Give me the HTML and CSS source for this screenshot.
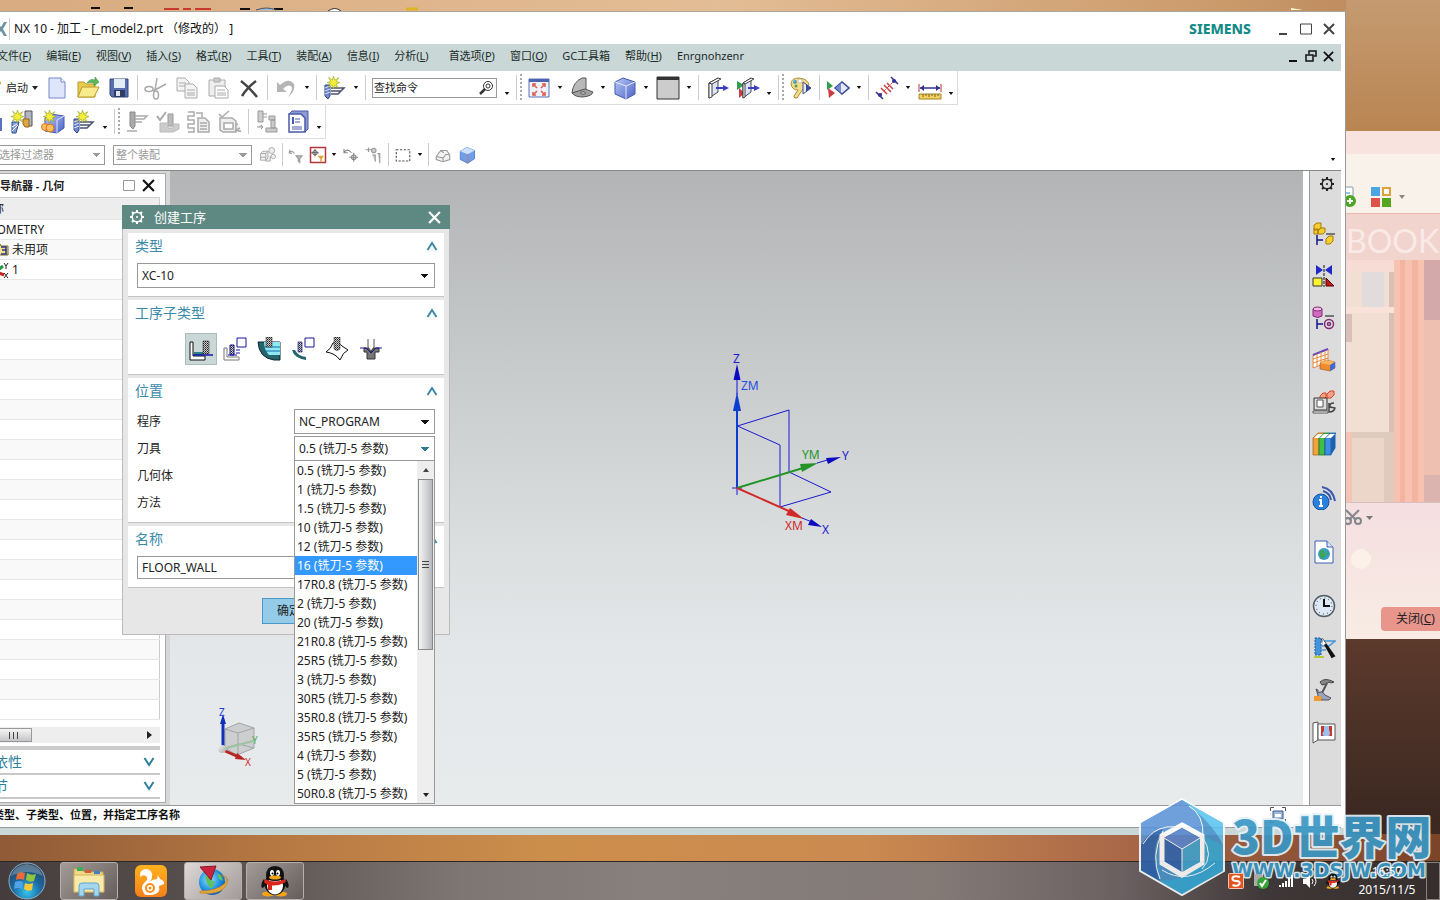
FILE: index.html
```html
<!DOCTYPE html>
<html lang="zh-CN">
<head>
  <meta charset="UTF-8">
  <meta name="viewport" content="width=device-width, initial-scale=1.0">
  <title>NX 10 - 加工</title>
  <link rel="stylesheet" href="styles.css">
</head>
<body>
<!-- shared shapes -->
<svg class="defs" aria-hidden="true">
  <defs>
    <linearGradient id="blueFace" x1="0" y1="0" x2="1" y2="1"><stop offset="0" stop-color="#b9c8f6"/><stop offset="1" stop-color="#4d63c6"/></linearGradient>
    <linearGradient id="grayFace" x1="0" y1="0" x2="1" y2="1"><stop offset="0" stop-color="#f2f2f2"/><stop offset="1" stop-color="#aaa"/></linearGradient>
    <linearGradient id="orange" x1="0" y1="0" x2="0" y2="1"><stop offset="0" stop-color="#ffb21c"/><stop offset="1" stop-color="#f5801a"/></linearGradient>
    <radialGradient id="orb" cx=".5" cy=".8" r=".8"><stop offset="0" stop-color="#35c4ee"/><stop offset=".5" stop-color="#1c669f"/><stop offset="1" stop-color="#28415c"/></radialGradient>
    <radialGradient id="globe" cx=".4" cy=".4" r=".7"><stop offset="0" stop-color="#8fe4ff"/><stop offset=".6" stop-color="#1f8fe0"/><stop offset="1" stop-color="#0b4fa0"/></radialGradient>
    <pattern id="knurl" width="2" height="2" patternUnits="userSpaceOnUse"><rect width="2" height="2" fill="#ccc"/><rect width="1" height="1" fill="#222"/><rect x="1" y="1" width="1" height="1" fill="#555"/></pattern>
    <symbol id="caret" viewBox="0 0 6 4"><path d="M0 0h6L3 4z" fill="currentColor"/></symbol>
    <symbol id="cross" viewBox="0 0 12 12"><path d="M1 1l10 10M11 1L1 11" stroke="currentColor" stroke-width="2" fill="none"/></symbol>
    <symbol id="up" viewBox="0 0 12 10"><path d="M1.500 9L6 2l4.500 7" stroke="currentColor" stroke-width="2" fill="none"/></symbol>
    <symbol id="down" viewBox="0 0 12 10"><path d="M1.500 1L6 8l4.500-7" stroke="currentColor" stroke-width="2" fill="none"/></symbol>
    <symbol id="gear" viewBox="0 0 16 16"><g stroke="currentColor" fill="none"><circle cx="8" cy="8" r="4.800" stroke-width="1.500"/><path d="M8 1v2M8 13v2M1 8h2M13 8h2M3 3l1.500 1.500M11.500 11.500L13 13M13 3l-1.500 1.500M4.500 11.500L3 13" stroke-width="2"/></g><circle cx="8" cy="8" r="1" fill="currentColor"/></symbol>
    <symbol id="spark" viewBox="0 0 12 12"><path d="M6 0l1.200 3.800L11 1.500 8.500 5 12 6 8.500 7.300 10.500 11 7 8.700 6 12 4.800 8.500 1 10.500 3.300 7 0 6l3.500-1L1.500 1.200 4.800 3.700z" fill="#f3ee3a" stroke="#8c9a20" stroke-width=".5"/></symbol>
    <symbol id="newop" viewBox="0 0 24 24"><path d="M2 9h5v11l-2 3-3-3z" fill="#6f86c9" stroke="#33458f"/><path d="M2 12l5-2M2 15l5-2M2 18l5-2" stroke="#dde5fa"/><path d="M8 12h13l-3 3H8M8 18h7l3-3" fill="none" stroke="#4a5370" stroke-width="1.500"/><use href="#spark" x="4" y="0" width="13" height="13"/></symbol>
    <symbol id="cubeblue" viewBox="0 0 24 24"><path d="M2 6l8-4 12 4v12l-9 5-11-5z" fill="url(#blueFace)" stroke="#4358b2"/><path d="M2 6l11 4 9-4M13 10v13" fill="none" stroke="#e1e8ff"/></symbol>
    <symbol id="penguin" viewBox="0 0 28 32"><ellipse cx="7" cy="29" rx="6" ry="2.500" fill="#f7a413"/><ellipse cx="20" cy="29" rx="6" ry="2.500" fill="#f7a413"/><path d="M3 14Q-1 19 1 23q2 0 4-4zM25 14q4 5 2 9-2 0-4-4z" fill="#111"/><ellipse cx="14" cy="19" rx="10.500" ry="11" fill="#111"/><ellipse cx="14" cy="21" rx="8" ry="8.500" fill="#fff"/><path d="M5 11Q5 1 14 1t9 10q0 5-9 5t-9-5z" fill="#111"/><ellipse cx="11" cy="8" rx="2" ry="3" fill="#fff"/><ellipse cx="17" cy="8" rx="2" ry="3" fill="#fff"/><circle cx="11.500" cy="8.500" r="1"/><circle cx="16.500" cy="8.500" r="1"/><ellipse cx="14" cy="12.500" rx="6" ry="2" fill="#f7a413"/><path d="M4 14q10 5 20 0l1 3q-7 4-14 3.500V25H7v-5l-4-2.500z" fill="#d8261c"/></symbol>
  </defs>
</svg>

<div class="desktop">
  <!-- bottoms of the desktop shortcuts behind the window -->
  <svg class="shortcuts" width="1440" height="11" aria-hidden="true">
    <path d="M91 8h9M124 8h9M240 9h10M274 9h9" stroke="#111" stroke-width="2"/>
    <path d="M164 9h15M183 9h8M195 9h16" stroke="#c93a2c" stroke-width="2"/>
    <path d="M256 10q11-4 20 0" fill="#9db8de" stroke="#456"/><path d="M328 11q7-5 13 0" fill="#fff" stroke="#333"/>
    <path d="M406 9h12" stroke="#e0b321" stroke-width="3"/><path d="M1291 8l12 2h-12z" fill="#fff3d8"/>
  </svg>

  <!-- chat window behind -->
  <section class="chat">
    <div class="chat-top"></div>
    <div class="chat-tools">
      <svg width="14" height="24" viewBox="0 0 14 24"><rect x="-8" y="2" width="15" height="14" rx="1" fill="#fff" stroke="#7c98b0"/><path d="M0 8h4" stroke="#1a8cb5"/><circle cx="4" cy="16" r="6" fill="#4ba626"/><path d="M1 16h6M4 13v6" stroke="#fff" stroke-width="2"/></svg>
      <svg width="20" height="20" viewBox="0 0 20 20"><rect width="9" height="9" fill="#4ba5e2"/><rect x="12" y="1" width="7" height="7" fill="#fff" stroke="#dfa23a" stroke-width="2"/><rect y="11" width="9" height="9" fill="#dd524a"/><rect x="11" y="11" width="9" height="9" fill="#57a61f"/></svg>
      <svg class="chat-caret" width="8" height="4"><use href="#caret"/></svg>
    </div>
    <div class="chat-book">BOOK</div>
    <div class="chat-shelf">
      <svg width="100%" height="100%" viewBox="0 0 94 242" preserveAspectRatio="none"><rect width="94" height="242" fill="#f4c4b6"/><path d="M0 0h48v12H0z" fill="#f7dcd5"/><path d="M0 12h43v160H0z" fill="#f2dfd3"/><path d="M16 12h22v35H16z" fill="#e2dbdc"/><path d="M43 12h5v160h-5zM0 54h6v28H0z" fill="#d9bfb6"/><path d="M0 47h48v6H0z" fill="#f9e2da"/><path d="M6 172h42v70H6z" fill="#dfcbbe"/><path d="M6 178h32v64H6z" fill="#ecd6ca"/><path d="M48 0h30v242H48z" fill="#f7c3b0"/><path d="M54 0h5v242h-5zM66 0h6v242h-6z" fill="#f3b59f"/><path d="M78 0h16v60H78z" fill="#d3aaa9"/><path d="M78 60h16v155H78z" fill="#edc0b2"/><path d="M78 215h16v27H78z" fill="#dcb4af"/></svg>
    </div>
    <div class="chat-input">
      <svg width="30" height="18" viewBox="0 0 30 18"><g fill="none" stroke="#85868c" stroke-width="2"><path d="M0 1l10 10M13 1L3 11"/><circle cx="2" cy="12" r="3"/><circle cx="12" cy="12" r="3"/></g><path d="M20 7h7l-3.500 4z" fill="#777"/></svg>
      <span class="bubble"></span>
      <button class="chat-close">关闭(<u>C</u>)</button>
    </div>
  </section>

  <main class="nx">
    <header class="titlebar">
      <svg class="nx-logo" width="24" height="20" viewBox="0 0 24 20"><path d="M8 3l5 7-5 7h5l4-5 3 5h3l-4-7 4-7h-3l-3 5-4-5z" fill="#6e93a3"/></svg>
      <h1>NX 10 - 加工 - [_model2.prt （修改的） ]</h1>
      <strong class="brand">SIEMENS</strong>
      <div class="winbtns">
        <button aria-label="最小化"><svg width="12" height="12"><path d="M2 11h8" stroke="#444" stroke-width="2"/></svg></button>
        <button aria-label="最大化"><svg width="12" height="12"><path d="M.5 1h11v10H.5z" fill="none" stroke="#444"/></svg></button>
        <button aria-label="关闭"><svg width="12" height="12" color="#444"><use href="#cross"/></svg></button>
      </div>
    </header>

    <nav class="menubar">
      <a href="#">文件(<u>F</u>)</a><a href="#">编辑(<u>E</u>)</a><a href="#">视图(<u>V</u>)</a><a href="#">插入(<u>S</u>)</a><a href="#">格式(<u>R</u>)</a><a href="#">工具(<u>T</u>)</a><a href="#">装配(<u>A</u>)</a><a href="#">信息(<u>I</u>)</a><a href="#">分析(<u>L</u>)</a><a class="pref" href="#">首选项(<u>P</u>)</a><a href="#">窗口(<u>O</u>)</a><a href="#">GC工具箱</a><a href="#">帮助(<u>H</u>)</a><a href="#">Enrgnohzenr</a>
      <div class="docbtns">
        <button aria-label="最小化文档"><svg width="12" height="12"><path d="M2 11h8" stroke="#111" stroke-width="2"/></svg></button>
        <button aria-label="还原文档"><svg width="12" height="12"><path d="M4 4V1h7v5H9" fill="none" stroke="#111" stroke-width="1.500"/><path d="M1 5h7v6H1z" fill="none" stroke="#111" stroke-width="1.500"/></svg></button>
        <button aria-label="关闭文档"><svg width="11" height="11" color="#111"><use href="#cross"/></svg></button>
      </div>
    </nav>

    <div class="toolbars">
      <div class="tools">
        <button class="start-btn"><svg width="14" height="20" viewBox="0 0 14 20"><path d="M3 3q7-2 9 2l-5 8" fill="none" stroke="#d1a421" stroke-width="2"/></svg>启动<svg width="6" height="4"><use href="#caret"/></svg></button>
        <button class="tool" aria-label="新建"><svg viewBox="0 0 24 24"><path d="M4 2h12l4 4v16H4z" fill="#dfe5fb" stroke="#7787cb"/><path d="M16 2v4h4" fill="#fff" stroke="#7787cb"/></svg></button>
        <button class="tool" aria-label="打开"><svg viewBox="0 0 24 24"><path d="M2 21V6h6l2 2h9v13z" fill="#e8cc4c" stroke="#b99a2f"/><path d="M2 21l4-10h17l-5 10z" fill="#f9ea8c" stroke="#b99a2f"/><path d="M11 7q3-5 8-3V1l4 5-5 4V7q-4-1-7 0z" fill="#5cb85a" stroke="#37893a" stroke-width=".5"/></svg></button>
        <button class="tool" aria-label="保存"><svg viewBox="0 0 24 24"><path d="M3 3h18v18H5l-2-2z" fill="#5a6dad" stroke="#37467f"/><path d="M7 3h11v9H7z" fill="#e6ecf5"/><path d="M7 14h11v7H7z" fill="#303c63"/><path d="M9 15h4v5H9z" fill="#dfe4f0"/></svg></button>
        <i class="sep"></i>
        <button class="tool" aria-label="剪切"><svg viewBox="0 0 24 24" fill="none" stroke="#a9a9a9" stroke-width="1.500"><path d="M13 2l-2 12M22 8L9 15"/><ellipse cx="5" cy="13" rx="4" ry="2.500"/><ellipse cx="12" cy="19" rx="2.500" ry="4"/></svg></button>
        <button class="tool" aria-label="复制"><svg viewBox="0 0 24 24" fill="#f4f4f4" stroke="#aaa"><path d="M2 2h8l4 4v9H2z"/><path d="M10 8h8l4 4v10H10z"/><path d="M4 7h7M4 10h6M12 14h8M12 17h8M12 19h8"/></svg></button>
        <button class="tool" aria-label="粘贴"><svg viewBox="0 0 24 24" fill="#eee" stroke="#aaa"><path d="M3 4h16v16H3z"/><path d="M8 2h6v4H8z" fill="#ccc"/><path d="M9 10h9l4 4v8H9z" fill="#fff"/><path d="M11 14h8M11 17h9M11 19h9"/></svg></button>
        <button class="tool" aria-label="删除"><svg viewBox="0 0 24 24"><path d="M4 5q8 6 16 16M19 5Q10 12 5 20" fill="none" stroke="#444" stroke-width="2.500"/></svg></button>
        <i class="sep"></i>
        <button class="tool" aria-label="撤销"><svg viewBox="0 0 24 24"><path d="M3 6v10h10l-4-3q4-5 8-3 3 3-3 11 8-6 6-13Q15 1 6 9z" fill="#b5b5b5"/></svg></button>
        <i class="dd"><svg><use href="#caret"/></svg></i>
        <i class="sep"></i>
        <button class="tool" aria-label="创建工序"><svg><use href="#newop"/></svg></button>
        <i class="dd"><svg><use href="#caret"/></svg></i>
        <i class="sep"></i>
        <label class="search"><input type="text" value="查找命令" aria-label="查找命令"><svg width="16" height="16" viewBox="0 0 16 16" fill="none" stroke="#333"><circle cx="10" cy="6" r="4.500"/><circle cx="10" cy="6" r="2"/><path d="M7 9l-5 5" stroke-width="2.500"/></svg></label>
        <i class="dd low"><svg><use href="#caret"/></svg></i>
        <i class="sep"></i><i class="grip"></i>
        <button class="tool" aria-label="适合窗口"><svg viewBox="0 0 24 24"><path d="M2 3h20v18H2z" fill="#eef2fb" stroke="#5a6fb5"/><path d="M2 3h20v3H2z" fill="#4c63b0"/><path d="M10 12L6 8M14 12l4-4M10 15l-4 4M14 15l4 4" stroke="#dd5a4a" stroke-width="1.500"/><path d="M6 11V8h3M15 8h3v3M6 16v3h3M15 19h3v-3" fill="none" stroke="#dd5a4a" stroke-width="1.500"/></svg></button>
        <i class="dd"><svg><use href="#caret"/></svg></i>
        <button class="tool" aria-label="定向视图"><svg viewBox="0 0 24 24"><path d="M2 17q1-11 10-15h4v12z" fill="#b9b9b9" stroke="#555"/><path d="M2 17l13-4 8 3q-1 4-10 5-8 0-11-4z" fill="#a2a2a2" stroke="#555"/><ellipse cx="13" cy="17" rx="2.500" ry="1.200" fill="#ddd" stroke="#555"/></svg></button>
        <i class="dd"><svg><use href="#caret"/></svg></i>
        <button class="tool" aria-label="渲染样式"><svg><use href="#cubeblue"/></svg></button>
        <i class="dd"><svg><use href="#caret"/></svg></i>
        <button class="tool" aria-label="背景"><svg viewBox="0 0 24 24"><path d="M1 1h22v22H1z" fill="#ccc" stroke="#333"/><path d="M1 1h22v3H1z" fill="#333"/></svg></button>
        <i class="dd"><svg><use href="#caret"/></svg></i>
        <i class="sep"></i>
        <button class="tool" aria-label="编辑截面"><svg viewBox="0 0 24 24"><path d="M4 7l9-5v14l-9 6z" fill="#dce4fa" stroke="#444"/><path d="M4 7l3 1v13l-3 1z" fill="#fff" stroke="#444"/><path d="M4 7l9-5 3 1-9 5z" fill="#fff" stroke="#444"/><path d="M11 12h9" stroke="#3c3fc6" stroke-width="2"/><path d="M18 9l6 3-6 3z" fill="#3c3fc6"/></svg></button>
        <button class="tool" aria-label="剪切截面"><svg viewBox="0 0 24 24"><path d="M1 5l7 4-7 5z" fill="#2f9e4d"/><path d="M3 12l6 5-6 5z" fill="#cc3d42"/><path d="M7 7l8-5v14l-8 6z" fill="#dce4fa" stroke="#444"/><path d="M7 7l2 1v13l-2 1zM7 7l8-5 3 1-9 5z" fill="#fff" stroke="#444"/><path d="M12 12h8" stroke="#3c3fc6" stroke-width="2"/><path d="M18 9l6 3-6 3z" fill="#3c3fc6"/></svg></button>
        <i class="dd low"><svg><use href="#caret"/></svg></i>
        <i class="sep"></i><i class="grip"></i>
        <button class="tool" aria-label="编辑对象显示"><svg viewBox="0 0 24 24"><path d="M2 8q0-6 8-6 9 1 10 7-4 1-6 4l-6 9q-3 1-3-2l4-6q-6 0-7-6z" fill="#f4dc8a" stroke="#a98d3a"/><circle cx="6" cy="6" r="2" fill="#4fa2c7"/><circle cx="11" cy="5" r="2" fill="#fff" stroke="#999" stroke-width=".5"/><circle cx="7" cy="10" r="1.500" fill="#4f9e5c"/><path d="M14 6l8 6-8 6z" fill="#e4e8fa" stroke="#444f80"/><path d="M17 8l5 4-5 4z" fill="#384a94"/></svg></button>
        <i class="sep"></i>
        <button class="tool" aria-label="显示和隐藏"><svg viewBox="0 0 24 24"><path d="M1 5l6 5-6 4z" fill="#2f9e4d"/><path d="M2 12l7 5-6 5z" fill="#cc3d42"/><path d="M9 12l7-6 7 6-7 6z" fill="#e4e8fa" stroke="#384a94" stroke-width="1.500"/><path d="M15 7v10l-5-5z" fill="#7389cf"/></svg></button>
        <i class="dd"><svg><use href="#caret"/></svg></i>
        <i class="sep"></i>
        <button class="tool" aria-label="测量距离"><svg viewBox="0 0 24 24"><path d="M1 16l7 7M16 1l7 7" stroke="#303096" stroke-width="1.500"/><path d="M5 19L19 5" stroke="#c33" stroke-dasharray="3 2"/><path d="M6 12l6 6M9 9l7 7M12 7l6 6" stroke="#c94343" stroke-width="1.500"/><circle cx="5" cy="19" r="2" fill="#303096"/><circle cx="19" cy="5" r="2" fill="#303096"/></svg></button>
        <i class="dd"><svg><use href="#caret"/></svg></i>
        <button class="tool" aria-label="测量"><svg viewBox="0 0 24 24"><path d="M1 8v8M23 8v8" stroke="#b33"/><path d="M2 12h20" stroke="#303096" stroke-width="1.500"/><path d="M2 12l4-3v6zM22 12l-4-3v6z" fill="#303096"/><path d="M1 18h22v5H1z" fill="#f2d263" stroke="#a48326"/><path d="M5 18v3M8 18v2M11 18v3M14 18v2M17 18v3M20 18v2" stroke="#7a601c"/></svg></button>
        <i class="dd low"><svg><use href="#caret"/></svg></i>
      </div>

      <div class="tools second">
        <button class="tool" aria-label="创建程序"><svg viewBox="0 0 24 24"><path d="M13 8h10v13H13z" fill="#5a72c0"/></svg></button>
        <button class="tool" aria-label="创建刀具"><svg viewBox="0 0 24 24"><path d="M2 12h7L6 23H2z" fill="#7fa0dd" stroke="#334a8c"/><path d="M2 21l6-6M2 17l5-3" stroke="#fff"/><path d="M15 1h7v15h-7z" fill="#b0b5bf" stroke="#555"/><path d="M13 9h6v8h-4l-2-3z" fill="#e0a63e" stroke="#8f6620"/><use href="#spark" x="1" y="0" width="13" height="13"/></svg></button>
        <button class="tool" aria-label="创建几何体"><svg viewBox="0 0 24 24"><path d="M4 8l6-4 13 2v12l-7 5-12-2z" fill="url(#blueFace)" stroke="#4358b2"/><path d="M16 10l7-4M16 10v13" stroke="#dde4ff"/><circle cx="4" cy="17" r="3.500" fill="#fcbf5b" stroke="#d9711f"/><circle cx="9" cy="18" r="4" fill="#fcbf5b" stroke="#d9711f"/><use href="#spark" x="2" y="0" width="13" height="13"/></svg></button>
        <button class="tool" aria-label="创建工序"><svg><use href="#newop"/></svg></button>
        <i class="dd low"><svg><use href="#caret"/></svg></i>
        <i class="sep"></i><i class="grip"></i>
        <button class="tool" aria-label="生成刀轨"><svg viewBox="0 0 24 24"><path d="M5 2h5v14l-2 3-3-3z" fill="#aaa" stroke="#888"/><path d="M10 6h12l-3 3h-9M10 12h7M2 21h10" fill="none" stroke="#aaa" stroke-width="1.500"/></svg></button>
        <button class="tool" aria-label="确认刀轨"><svg viewBox="0 0 24 24"><path d="M1 6l3 4 6-8" fill="none" stroke="#aaa" stroke-width="2"/><path d="M12 4h5v12h-5z" fill="#bbb" stroke="#999"/><path d="M4 13h8v5h5v-4h6v5l-6 3H4z" fill="#ccc" stroke="#bbb"/></svg></button>
        <button class="tool" aria-label="后处理"><svg viewBox="0 0 24 24" fill="none" stroke="#aaa" stroke-width="1.500"><path d="M1 2h6v4H1v4h6v4H1v4h6v4H1"/><path d="M11 8h7l4 4v10H11z" fill="#eee"/><path d="M13 13h7M13 16h7M13 19h7M9 3h6v4"/></svg></button>
        <button class="tool" aria-label="车间文档"><svg viewBox="0 0 24 24" fill="#eee" stroke="#aaa" stroke-width="1.500"><path d="M1 4l3 3 7-6" fill="none"/><path d="M2 8v12l3 2h13V11l-4-3zM6 13h9v6H6z"/><path d="M17 21l5-3M20 14q-3 0-2 4t5 3"/></svg></button>
        <i class="sep"></i>
        <button class="tool" aria-label="机床"><svg viewBox="0 0 24 24" fill="#ccc" stroke="#999"><path d="M3 1h5v11H3zM8 4h4M8 7h4M14 6h6v4h-6zM16 10h4v8h-4zM11 18h11v4H11zM2 17h6l-2-2M6 19l2-2"/></svg></button>
        <button class="tool" aria-label="工序文档"><svg viewBox="0 0 24 24"><path d="M3 4l3-3h16v18l-3 3z" fill="#8c9bd6" stroke="#4a5aa8"/><path d="M3 4h12l4 4v14H3z" fill="#fff" stroke="#4a5aa8" stroke-width="1.500"/><path d="M6 7h2v7H6z" fill="#4a5aa8"/><path d="M9 9h5M9 12h5M6 17h10M6 19h10" stroke="#4a5aa8"/></svg></button>
        <i class="dd low"><svg><use href="#caret"/></svg></i>
      </div>

      <div class="tools filters">
        <select class="filter-kind" disabled aria-label="选择过滤器"><option>无选择过滤器</option></select>
        <select class="filter-scope" disabled aria-label="范围"><option>整个装配</option></select>
        <button class="tool sm" aria-label="装配"><svg viewBox="0 0 24 24" fill="#eee" stroke="#999"><path d="M2 10h7v9H2zM2 10l3-3h7v9l-3 3M9 10l3-3M2 15h7M8 20h7v-7"/><circle cx="17" cy="6" r="4"/><circle cx="19" cy="14" r="3"/></svg></button>
        <i class="sep"></i>
        <button class="tool sm" aria-label="撤销过滤"><svg viewBox="0 0 24 24" fill="none" stroke="#999" stroke-width="1.500"><path d="M4 5l-1 4 4 1M3 9q4-4 7 1"/><path d="M12 13h8l-3 4v5l-2-2v-3z" fill="#bbb"/></svg></button>
        <button class="tool sm" aria-label="选择过滤"><svg viewBox="0 0 24 24"><path d="M2 2h20v20H2z" fill="#fff" stroke="#b0383c" stroke-width="2"/><path d="M8 4v10M3 9h10" stroke="#333"/><circle cx="8" cy="9" r="3" fill="none" stroke="#333"/><path d="M11 13h9l-3 4v4h-2v-4z" fill="#e6a12f"/></svg></button>
        <i class="dd narrow"><svg><use href="#caret"/></svg></i>
        <button class="tool sm" aria-label="旋转"><svg viewBox="0 0 24 24" fill="none" stroke="#888" stroke-width="1.500"><path d="M4 4v5h5M4 9q4-7 10 0M17 9v12M11 15h12"/><circle cx="17" cy="15" r="3"/></svg></button>
        <button class="tool md" aria-label="捕捉"><svg viewBox="0 0 24 24" fill="#ccc" stroke="#999" stroke-width="1.500"><path d="M2 5h10M6 2v6"/><circle cx="13" cy="6" r="3"/><path d="M11 12h4v9M18 10h3v13"/></svg></button>
        <i class="sep"></i>
        <button class="tool md" aria-label="矩形选择"><svg viewBox="0 0 24 24"><path d="M3 5h18v15H3z" fill="none" stroke="#555" stroke-width="1.500" stroke-dasharray="3 2"/></svg></button>
        <i class="dd narrow"><svg><use href="#caret"/></svg></i>
        <i class="sep"></i>
        <button class="tool md" aria-label="线框"><svg viewBox="0 0 24 24" fill="#f3f3f3" stroke="#999" stroke-width="1.500"><path d="M3 14l6-8h8l4 6v6l-9 3-9-3z"/><path d="M3 14l9 2v5M12 16l4-5 5 1M9 6l4 3"/></svg></button>
        <button class="tool md" aria-label="着色"><svg viewBox="0 0 24 24"><path d="M3 7l9-5 10 4v11l-9 6-10-5z" fill="#6f9fe8" stroke="#4a72be"/><path d="M3 7l9-5 10 4-9 5z" fill="#cfe3ff"/><path d="M13 11v12" stroke="#d66"/></svg></button>
        <i class="dd far"><svg><use href="#caret"/></svg></i>
      </div>
    </div>

    <div class="work">
      <aside class="nav">
        <div class="nav-title"><b>工序导航器 - 几何</b><button aria-label="停靠"><svg width="12" height="12"><path d="M.5.5h11v10H.5z" fill="none" stroke="#999"/></svg></button><button aria-label="关闭导航器"><svg width="13" height="13" color="#111"><use href="#cross"/></svg></button></div>
        <table class="tree">
          <thead><tr><th>名称</th></tr></thead>
          <tbody>
            <tr><td class="root">GEOMETRY</td></tr>
            <tr><td class="leaf"><svg width="14" height="14" viewBox="0 0 14 14"><path d="M0 2h5l1 2h7v9H0z" fill="#f3e28c" stroke="#7d6b1c"/><path d="M6 5h5v7H6M7 8h4" fill="none" stroke="#29308e" stroke-width="1.500"/></svg>未用项</td></tr>
            <tr><td class="leaf"><svg width="14" height="16" viewBox="0 0 14 16"><path d="M2 9l6-5" stroke="#2a9a44" stroke-width="3"/><path d="M2 10l7 3" stroke="#c22" stroke-width="3"/><path d="M9 1l2 3 2-3M11 4v3M9 11l4 5M13 11l-4 5M1 1h4L1 6" fill="none" stroke="#222"/></svg>1</td></tr>
            <tr><td></td></tr><tr><td></td></tr><tr><td></td></tr><tr><td></td></tr><tr><td></td></tr><tr><td></td></tr><tr><td></td></tr><tr><td></td></tr><tr><td></td></tr><tr><td></td></tr><tr><td></td></tr><tr><td></td></tr><tr><td></td></tr><tr><td></td></tr><tr><td></td></tr><tr><td></td></tr><tr><td></td></tr><tr><td></td></tr><tr><td></td></tr><tr><td></td></tr><tr><td></td></tr><tr><td></td></tr>
          </tbody>
        </table>
        <div class="hscroll"><span class="hthumb"></span><svg width="5" height="8"><path d="M0 0l5 4-5 4z" fill="#222"/></svg></div>
        <button class="fold">相依性<svg width="12" height="10"><use href="#down"/></svg></button>
        <button class="fold detail">细节<svg width="12" height="10"><use href="#down"/></svg></button>
      </aside>

      <div class="canvas">
        <!-- work and machine coordinate systems -->
        <svg class="wcs" width="180" height="210" viewBox="0 0 180 210">
          <g fill="none" stroke="#1a1ad0"><path d="M47.500 86L99 70v62l42 20-51 15V105z"/><path d="M47 84v63M42 148h10M47 143v12"/></g>
          <path d="M47 30v25" stroke="#6b6fd6" stroke-width="2"/><path d="M47 24l3.500 16h-7z" fill="#0a0ac2"/>
          <path d="M47 70v78" stroke="#0b3fd0" stroke-width="2"/><path d="M47 52l4 19h-8z" fill="#0b3fd0"/>
          <path d="M47 148l66-20" stroke="#239428" stroke-width="2"/><path d="M128 123l-18 1 2 8z" fill="#239428"/>
          <path d="M127 123l14-4" stroke="#1a1ad0"/><path d="M151 117l-15 1 2 6z" fill="#0a0ac2"/>
          <path d="M47 148l54 24" stroke="#d02a2a" stroke-width="2"/><path d="M114 179l-14-11-4 7z" fill="#d02a2a"/>
          <path d="M112 178l10 4" stroke="#1a1ad0"/><path d="M132 187l-11-8-3 6z" fill="#0a0ac2"/>
          <text x="43" y="23" fill="#1a1ad0">Z</text><text x="51" y="50" fill="#1f4fe0">ZM</text><text x="112" y="119" fill="#239428">YM</text><text x="152" y="120" fill="#1a1ad0">Y</text><text x="95" y="190" fill="#d02a2a">XM</text><text x="132" y="194" fill="#1a1ad0">X</text>
        </svg>
        <svg class="triad" width="50" height="64" viewBox="0 0 50 64">
          <path d="M8 22l14-6 15 5v20l-17 7-12-7z" fill="#ccced0" stroke="#a2a4a6"/><path d="M8 22l13 4 16-5M21 26v21M8 41l14-4 15 4" fill="none" stroke="#a2a4a6"/>
          <path d="M6 42l30-8" stroke="#9cc49d" stroke-width="2"/><path d="M6 40V14" stroke="#1230b8" stroke-width="3"/><path d="M6 7l3 10H3z" fill="#1230b8"/>
          <path d="M6 43l18 8" stroke="#b82222" stroke-width="3"/><path d="M29 53l-9-7-2 6z" fill="#b82222"/><circle cx="5" cy="42" r="4" fill="url(#grayFace)"/>
          <text x="2" y="9" fill="#1f3fd0">Z</text><text x="35" y="37" fill="#4caf50">Y</text><text x="28" y="59" fill="#d02a2a">X</text>
        </svg>
      </div>

      <nav class="resource">
        <button aria-label="设置"><svg class="gear-ic" width="16" height="16"><use href="#gear"/></svg></button>
        <button aria-label="装配导航器"><svg viewBox="0 0 24 24"><g fill="#f7cf2a" stroke="#a67a0a"><path d="M2 3l3-2h4v5l-2 2H2zM6 8l3-2h4v4l-2 2H6zM2 7h4v5H2z"/><path d="M14 17l3-3h4v5l-3 3h-4z"/></g><path d="M14 12h9" stroke="#111"/><path d="M5 13v10M5 18h6" stroke="#15158c" stroke-width="1.500"/></svg></button>
        <button aria-label="约束导航器"><svg viewBox="0 0 24 24"><path d="M4 1l7 5-7 5zM20 1l-7 5 7 5z" fill="#2029c9"/><path d="M12 1v22" stroke="#111" stroke-dasharray="3 1"/><path d="M1 14h9v8H1z" fill="#fbf330" stroke="#333"/><path d="M14 14l8 8h-8z" fill="#c91515" stroke="#500"/></svg></button>
        <button aria-label="部件导航器"><svg viewBox="0 0 24 24"><path d="M1 3v7q5 3 9 0V3z" fill="#d16bbf" stroke="#822a75"/><ellipse cx="5.500" cy="3" rx="4.500" ry="2" fill="#efb6e6" stroke="#822a75"/><path d="M13 10h9" stroke="#111"/><path d="M5 13v10M5 18h6" stroke="#15158c" stroke-width="1.500"/><g fill="none" stroke="#822a75" stroke-width="1.500"><circle cx="17" cy="18" r="4.500"/><circle cx="17" cy="18" r="1.500"/></g></svg></button>
        <button aria-label="工序导航器"><svg viewBox="0 0 24 24"><path d="M1 7l15-6v13L1 20z" fill="#fff" stroke="#e68a3d"/><path d="M1 7l15-6" stroke="#6c4bb8" stroke-width="2"/><path d="M1 11l15-5M1 15l15-5M5 6v12M9 4v12M13 3v12" stroke="#e68a3d"/><path d="M8 15l6-3 9 2v6l-5 3-10-2z" fill="#f08a2c" stroke="#8a4512" stroke-width=".5"/><path d="M8 15l6-3 9 2-5 3z" fill="#fbb45e"/><path d="M18 17l5-3v6l-5 3z" fill="#3a6bd6"/></svg></button>
        <button aria-label="机床导航器"><svg viewBox="0 0 24 24"><path d="M15 4l3-3h4v4l-3 3h-4zM8 6l3-3h3v4l-2 2H8z" fill="#f6a08a" stroke="#d2491f"/><path d="M2 8h13v12H2z" fill="#ddd" stroke="#333"/><path d="M5 10h6v7H5zM1 21h15v2H1z" fill="#fff" stroke="#555"/><path d="M22 13q-5 0-4 4l5 1q-1 4-6 4v-9" fill="none" stroke="#444" stroke-width="1.500"/></svg></button>
        <button class="gap" aria-label="重用库"><svg viewBox="0 0 24 24"><path d="M1 6l5-5h6L7 6v17H1z" fill="#f0a33b" stroke="#9c5b10" stroke-width=".7"/><path d="M7 6l5-5h6l-5 5v17H7z" fill="#3fbf4a" stroke="#156b1e" stroke-width=".7"/><path d="M13 6l5-5h6l-5 5v17h-6z" fill="#3f8fe6" stroke="#134a8e" stroke-width=".7"/><path d="M19 6l4.500-5v15L19 23z" fill="#1e5fae"/><path d="M2 6l4-4h5L7 6zM8 6l4-4h5l-4 4zM14 6l4-4h5l-4 4z" fill="#fff"/></svg></button>
        <button class="gap" aria-label="HD3D 工具"><svg viewBox="0 0 24 24"><circle cx="9" cy="16" r="8" fill="#2a80dd" stroke="#15529c"/><path d="M9 13v7M9 10v2M7 14h2M7 20h4" stroke="#fff" stroke-width="2"/><path d="M10 1q11 2 13 14M11 5q7 2 8 9" fill="none" stroke="#3a58ae" stroke-width="2"/></svg></button>
        <button class="gap" aria-label="Web 浏览器"><svg viewBox="0 0 24 24"><path d="M3 1h12l6 6v16H3z" fill="#fff" stroke="#3b62b3"/><path d="M15 1v6h6" fill="#dbe6fa" stroke="#3b62b3"/><circle cx="12" cy="14" r="6" fill="#3b9bc9"/><path d="M8 11q3-3 4 0l2 4-3 4q-4-1-3-8zM15 10l2 4-2 1z" fill="#3da653"/></svg></button>
        <button aria-label="历史记录"><svg viewBox="0 0 24 24"><circle cx="12" cy="12" r="10.500" fill="#dde9f4" stroke="#545c66" stroke-width="1.500"/><circle cx="12" cy="12" r="8" fill="none" stroke="#333" stroke-dasharray="1 3.200"/><path d="M12 5v7h6" fill="none" stroke="#111" stroke-width="2"/></svg></button>
        <button aria-label="加工向导"><svg viewBox="0 0 24 24"><path d="M3 2h6v17H3z" fill="#4596d8" stroke="#225f9c" stroke-dasharray="2 1"/><path d="M9 5h14l-6 5H9M9 14h5" fill="none" stroke="#4596d8" stroke-width="1.500"/><path d="M10 3l12 17-2 1z" stroke="#111" stroke-width="2"/><path d="M10 2l4 6-3 1z" fill="#fff"/><path d="M2 21h10" stroke="#b7c934" stroke-width="2"/></svg></button>
        <button aria-label="角色"><svg viewBox="0 0 24 24"><path d="M8 4q5-5 14 0l-3 1-2-1-3 2-4 1z" fill="#888" stroke="#444"/><path d="M15 5L9 17" stroke="#555" stroke-width="2"/><path d="M4 11q3 0 2 4 4-3 7 2l6 3-2 2H5l1-5z" fill="#9aa2be" stroke="#555"/><path d="M2 18h7v5H2z" fill="#f49a2a"/></svg></button>
        <button aria-label="系统场景"><svg viewBox="0 0 24 24"><path d="M1 3l5-1v18l-5 3z" fill="#fff" stroke="#555"/><path d="M6 4h17v16H6z" fill="#fff" stroke="#555"/><path d="M9 6h11v10H9z" fill="#c7372e"/><path d="M12 6h5v4q2 3 0 6h-5q-3-2 0-5z" fill="#9bc1f0"/></svg></button>
      </nav>
    </div>

    <footer class="status"><b>选择类型、子类型、位置，并指定工序名称</b><svg width="16" height="16" viewBox="0 0 16 16"><path d="M.5 4V.5H4M12 .5h3.500V4M.5 12v3.500H4M12 15.500h3.500V12" fill="none" stroke="#555"/><path d="M3 4h10v8H3z" fill="#9bb8dc" stroke="#3c5a88"/><path d="M5 7h6v3H5z" fill="#fff"/></svg></footer>
  </main>

  <!-- create operation dialog -->
  <form class="dialog">
    <header class="dialog-head"><svg width="16" height="16"><use href="#gear"/></svg><h2>创建工序</h2><button type="button" aria-label="关闭对话框"><svg width="13" height="13"><use href="#cross"/></svg></button></header>
    <div class="dialog-body">
      <section class="group type">
        <h3>类型<svg width="12" height="10"><use href="#up"/></svg></h3>
        <select aria-label="类型"><option>XC-10</option></select>
      </section>
      <section class="group subtype">
        <h3>工序子类型<svg width="12" height="10"><use href="#up"/></svg></h3>
        <div class="subs">
          <button type="button" class="on" aria-label="底壁加工"><svg viewBox="0 0 24 24"><path d="M1 5h3v14h12v4H1z" fill="#fff" stroke="#111"/><path d="M5 15h9v3H5z" fill="#2e7f82"/><path d="M14 4h6v13h-6z" fill="url(#knurl)" stroke="#222" stroke-width=".5"/><path d="M4 18h20" stroke="#1414a8" stroke-width="1.500"/></svg></button>
          <button type="button" aria-label="平面铣"><svg viewBox="0 0 24 24"><path d="M1 11v12h15v-3H4v-9z" fill="#fff" stroke="#777"/><path d="M14 1h9v9h-9z" fill="#fff" stroke="#15159a"/><path d="M7 8h4v10H7z" fill="url(#knurl)" stroke="#15159a"/><path d="M5 18h9M13 13h4M13 16h4" stroke="#15159a"/></svg></button>
          <button type="button" aria-label="型腔铣"><svg viewBox="0 0 24 24"><path d="M1 5h22v18h-6Q2 21 1 5z" fill="#23676c" stroke="#123"/><path d="M7 5h16v13H12Q7 13 7 5z" fill="#8deaf3"/><path d="M7 10h16M9 14h14" stroke="#1667a8"/><path d="M9 0h6v10H9z" fill="url(#knurl)" stroke="#222" stroke-width=".5"/></svg></button>
          <button type="button" aria-label="深度轮廓加工"><svg viewBox="0 0 24 24"><path d="M1 13q2 8 14 10v-3Q7 19 4 13z" fill="#23676c"/><path d="M14 1h9v9h-9z" fill="#fff" stroke="#15159a"/><path d="M7 5h4v10H7z" fill="url(#knurl)" stroke="#15159a" stroke-width=".7"/></svg></button>
          <button type="button" aria-label="固定轮廓铣"><svg viewBox="0 0 24 24"><path d="M1 15q5-3 7-9 6-1 9 3l6 4q-5 2-8 10-5-7-14-8z" fill="#fff" stroke="#111"/><path d="M9 0h6v12q-3 3-6 0z" fill="url(#knurl)" stroke="#222" stroke-width=".5"/></svg></button>
          <button type="button" aria-label="孔加工"><svg viewBox="0 0 24 24"><path d="M9 2v8l3 4 3-4V2" fill="#fff" stroke="#555"/><path d="M5 11h4l3 4 3-4h5v4h-4v7H8v-7H5z" fill="#777" stroke="#333"/><path d="M1 11h6l5 5 5-5h6" fill="none" stroke="#15159a"/></svg></button>
        </div>
      </section>
      <section class="group place">
        <h3>位置<svg width="12" height="10"><use href="#up"/></svg></h3>
        <div class="field"><label for="prog">程序</label><select id="prog"><option>NC_PROGRAM</option></select></div>
        <div class="field open"><label for="tool">刀具</label><select id="tool"><option>0.5 (铣刀-5 参数)</option></select>
          <div class="popup">
            <ul role="listbox" aria-label="刀具">
              <li>0.5 (铣刀-5 参数)</li><li>1 (铣刀-5 参数)</li><li>1.5 (铣刀-5 参数)</li><li>10 (铣刀-5 参数)</li><li>12 (铣刀-5 参数)</li><li class="sel">16 (铣刀-5 参数)</li><li>17R0.8 (铣刀-5 参数)</li><li>2 (铣刀-5 参数)</li><li>20 (铣刀-5 参数)</li><li>21R0.8 (铣刀-5 参数)</li><li>25R5 (铣刀-5 参数)</li><li>3 (铣刀-5 参数)</li><li>30R5 (铣刀-5 参数)</li><li>35R0.8 (铣刀-5 参数)</li><li>35R5 (铣刀-5 参数)</li><li>4 (铣刀-5 参数)</li><li>5 (铣刀-5 参数)</li><li>50R0.8 (铣刀-5 参数)</li>
            </ul>
            <div class="vscroll"><svg width="6" height="4"><path d="M0 4h6L3 0z" fill="#444"/></svg><span class="vthumb"></span><svg class="vdown" width="6" height="4"><use href="#caret"/></svg></div>
          </div>
        </div>
        <div class="field"><label for="geo">几何体</label><select id="geo"></select></div>
        <div class="field"><label for="method">方法</label><select id="method"></select></div>
      </section>
      <section class="group name">
        <h3>名称<svg width="12" height="10"><use href="#up"/></svg></h3>
        <input type="text" value="FLOOR_WALL" aria-label="名称">
      </section>
      <div class="actions"><button type="button" class="primary">确定</button></div>
    </div>
  </form>

  <footer class="taskbar">
    <button class="orb" aria-label="开始"><svg width="40" height="38" viewBox="0 0 40 38"><circle cx="20" cy="19" r="18" fill="url(#orb)" stroke="#8fb0c6"/><path d="M10 12q4-3 8-1l-1 7q-4-2-8 0z" fill="#ef6a33"/><path d="M20 11q4 3 9 1l-2 7q-4 2-8-1z" fill="#8fc63d"/><path d="M8 20q4-2 8 0l-1 7q-4-2-8 0z" fill="#4fa3e6"/><path d="M18 21q4 2 8 0l-1 7q-4 2-8-1z" fill="#fbc838"/><path d="M4 14Q8 3 20 2q12 1 16 12-16-8-32 0z" fill="#fff" opacity=".25"/></svg></button>
    <button class="task framed" aria-label="资源管理器"><svg width="34" height="32" viewBox="0 0 34 32"><path d="M2 4h8l2 3h19v20H2z" fill="#f1d987" stroke="#c9a94e"/><path d="M5 2h6v4H5z" fill="#3fae55"/><path d="M13 5h6v3h-6z" fill="#d85a32"/><path d="M22 6h6v3h-6z" fill="#3f82c9"/><path d="M2 10h30v17H2z" fill="#faeaa9" stroke="#d1b45f"/><path d="M7 31V21q0-3 3-3h14q3 0 3 3v10h-5v-7H12v7z" fill="#a4d6ef" stroke="#5ea6cc"/></svg></button>
    <button class="task" aria-label="UC 浏览器"><svg width="32" height="32" viewBox="0 0 32 32"><rect width="32" height="32" rx="6" fill="url(#orange)"/><path d="M10 30Q4 22 10 17q4-3 1-6-5-2-5 2-3-7 4-9 8 0 7 8 0 3-3 5 4-3 8-3l1-4 2 4q5 2 4 5l-5 2q2 8-7 9z" fill="#fff"/><circle cx="15" cy="23" r="5" fill="#f78f1a"/><circle cx="15" cy="23" r="3" fill="#fff"/><circle cx="15" cy="23" r="1.500" fill="#f78f1a"/></svg></button>
    <button class="task framed active" aria-label="NX"><svg width="34" height="32" viewBox="0 0 34 32"><circle cx="16" cy="17" r="13" fill="url(#globe)"/><path d="M9 12q5-3 6 1t4 3l-3 8q-5-3-7-12zM21 8q5 2 6 8l-4-2z" fill="#5dc25f"/><path d="M4 28q24 3 28-12 0-5-8-6 11 3 4 9-8 7-24 7z" fill="#e7a63a" stroke="#b47715" stroke-width=".5"/><path d="M4 2l16-1-5 14z" fill="#c9243c" stroke="#8c1526"/></svg></button>
    <button class="task framed" aria-label="QQ"><svg width="28" height="32"><use href="#penguin"/></svg></button>
    <div class="tray">
      <svg width="16" height="16" viewBox="0 0 16 16"><rect x=".5" y=".5" width="15" height="15" rx="1" fill="#e2541f" stroke="#f6c5ae"/><path d="M12 4Q4 2 4.500 6q0 2 4 2t3 3q-2 3-7 1" fill="none" stroke="#fff" stroke-width="2"/></svg>
      <svg width="18" height="18" viewBox="0 0 18 18"><path d="M2 2h8v12H2z" fill="#aaa"/><circle cx="11" cy="11" r="6" fill="#35a339"/><path d="M8 11l2 3 4-6" fill="none" stroke="#fff" stroke-width="2"/></svg>
      <svg width="16" height="16" viewBox="0 0 16 16" fill="#fff"><path d="M1 12h2v2H1zM4 10h2v4H4zM7 8h2v6H7zM10 5h2v9h-2zM13 2h2v12h-2z"/></svg>
      <svg width="16" height="16" viewBox="0 0 16 16"><path d="M1 6h3l4-4v13l-4-4H1z" fill="#fff"/><path d="M10 6q2 2 0 5M12 4q4 4 0 9" fill="none" stroke="#fff"/></svg>
      <svg width="14" height="16"><use href="#penguin"/></svg>
      <div class="clock"><span>16:57</span><span>2015/11/5</span></div>
      <button class="peek" aria-label="显示桌面"></button>
    </div>
  </footer>

  <svg class="watermark" width="304" height="104" viewBox="0 0 304 104">
    <g opacity=".88">
      <path d="M46 3l42 24v48L46 99 4 75V27z" fill="#4693cc" stroke="#fff" stroke-width="2"/>
      <path d="M46 4L5 27v22Q20 22 68 45 68 20 46 4z" fill="#5c93d8"/><path d="M46 4l41 23v22Q76 26 46 4z" fill="#5cc3ee"/>
      <path d="M5 49v25l19 11Q12 55 27 33 12 36 5 49z" fill="#2b62ad"/><path d="M87 49v26L46 98 24 85q40 2 43-45z" fill="#33a8d6"/>
      <path d="M7 48Q25 18 67 40M67 40Q68 19 53 10M27 35Q14 60 24 83M26 74q25 16 53-7M66 40q13 20 0 33" fill="none" stroke="#fff"/>
      <path d="M46 29l20 11v27L46 79 26 67V40z" fill="#2d63ad" stroke="#fff" stroke-width="5"/><path d="M46 32l18 10-18 11-18-11z" fill="#5585cd"/><path d="M46 53l18-11v24L46 76z" fill="#3ea3cf"/><path d="M28 42l18 11 18-11M46 53v23" fill="none" stroke="#fff"/>
    </g>
    <text class="wm-big" x="96" y="58">3D世界网</text>
    <text class="wm-url" x="96" y="81">WWW.3DSJW.COM</text>
  </svg>
</div>
</body>
</html>
```
FILE: styles.css
```css
* { box-sizing: border-box; }

body {
  margin: 0;
  font-family: "Noto Sans", "Noto Sans CJK SC", sans-serif;
  font-size: 12px;
  line-height: 16px;
  color: #222;
}

button, input, select { font: inherit; color: inherit; }
button { background: none; border: 0; padding: 0; }
svg { display: block; flex: none; }
h1, h2, h3, ul { margin: 0; padding: 0; font-weight: normal; }
.defs { position: absolute; width: 0; height: 0; }

.desktop {
  position: relative;
  min-height: 100vh;
  overflow: hidden;
  background:
    linear-gradient(90deg, #8f5a36, #b87a44 20%, #cc8e4b 38%, #cb8a50 60%, #a96848 78%, #7a4429) 0 bottom / 100% 66px no-repeat,
    linear-gradient(#5c3a2c, #3b2821 70%, #4c3226) right bottom / 110px 262px no-repeat,
    linear-gradient(#c59a70, #b98552) right top / 94px 131px no-repeat,
    linear-gradient(90deg, #d9ab80, #e3bd95 50%, #cb9a6b 85%, #b58356);
}
.shortcuts { position: absolute; top: 0; left: 0; }

/* Chat window */
.chat {
  position: absolute;
  top: 131px;
  right: 0;
  width: 94px;
  display: flex;
  flex-direction: column;
}
.chat-top { height: 23px; background: #f9e3df; }
.chat-tools {
  display: flex;
  align-items: center;
  height: 60px;
  padding-top: 26px;
  background: #f9f2ea;
  border-bottom: 1px solid #e9b9b2;
}
.chat-tools svg + svg { margin-left: 11px; }
.chat-tools .chat-caret { margin-left: 7px; color: #888; }
.chat-book {
  height: 46px;
  background: #f2d4cf;
  color: #f9eae7;
  font-family: Lato, sans-serif;
  font-size: 32px;
  line-height: 54px;
  overflow: hidden;
}
.chat-shelf { height: 242px; }
.chat-input {
  display: flex;
  flex-direction: column;
  align-items: flex-start;
  height: 137px;
  padding-top: 6px;
  background: linear-gradient(#f5dfe0, #f8ece4);
  border-top: 1px solid #d9c0bd;
}
.bubble { width: 20px; height: 20px; margin: 22px 5px; border-radius: 50%; background: #fbf1e8; }
.chat-close {
  align-self: flex-end;
  width: 59px;
  height: 24px;
  padding-left: 10px;
  border-radius: 4px 0 0 4px;
  background: #e8958c;
  margin-top: 16px;
}

/* Main window */
.nx {
  position: absolute;
  top: 11px;
  right: 94px;
  bottom: 65px;
  left: -40px;
  display: flex;
  flex-direction: column;
  padding-right: 4px;
  background: #fff;
  border-top: 1px solid #a9a6a4;
  border-right: 1px solid #999;
  border-bottom: 7px solid #c9d8d6;
}
.titlebar { display: flex; align-items: center; height: 32px; padding: 2px 6px 0 24px; }
.titlebar h1 { padding-left: 4px; margin-left: 1px; border-left: 1px solid #ccc; font-size: 12px; line-height: 22px; color: #111; }
.brand { margin-left: auto; font-size: 14px; font-weight: 800; color: #148b87; }
.winbtns, .docbtns { display: flex; }
.winbtns { gap: 11px; margin-left: 26px; }
.menubar {
  display: flex;
  align-items: center;
  gap: 15px;
  height: 27px;
  padding: 0 7px 3px 37px;
  background: #c9d8d6;
  font-size: 11px;
}
.menubar a { color: #1c2b2b; text-decoration: none; white-space: nowrap; }
.menubar .pref { margin-left: 5px; }
.docbtns { gap: 6px; margin-left: auto; }

.toolbars { height: 99px; }
.tools {
  display: flex;
  align-items: center;
  width: max-content;
  height: 34px;
  border-right: 1px solid #ddd;
  border-bottom: 1px solid #ddd;
  font-size: 11px;
}
.tools.second { padding-left: 15px; }
.start-btn { display: flex; align-items: center; justify-content: flex-end; gap: 4px; width: 81px; padding-right: 3px; }
.tool { display: flex; justify-content: center; width: 31px; }
.tool svg { width: 24px; height: 24px; }
.tool.sm { width: 22px; }
.tool.md { width: 24px; }
.tool.sm svg, .tool.md svg { width: 18px; height: 18px; }
.sep { align-self: stretch; width: 1px; margin: 4px 2px 4px 3px; background: #ccc; }
.grip { align-self: stretch; width: 2px; margin: 3px 1px; background: repeating-linear-gradient(#aaa 0 2px, #fff 2px 4px); }
.dd { display: flex; justify-content: center; width: 12px; color: #111; }
.dd svg { width: 6px; height: 3px; }
.dd.narrow { width: 10px; }
.dd.low { margin-top: 12px; }
.dd.far { margin: 10px 2px 0 auto; }
.search { display: flex; align-items: center; width: 125px; height: 20px; margin: 0 4px; border: 1px solid #999; }
.search input { width: 105px; padding: 0 1px; border: 0; outline: 0; background: none; }

select {
  appearance: none;
  height: 25px;
  padding: 0 4px;
  border: 1px solid #999;
  border-radius: 0;
  background-color: #fff;
  background-image: linear-gradient(45deg, transparent 50%, #111 50%), linear-gradient(315deg, transparent 50%, #111 50%);
  background-position: right 9px center, right 5px center;
  background-size: 4px 4px;
  background-repeat: no-repeat;
  color: #222;
}
.open select { background-image: linear-gradient(45deg, transparent 50%, #2b7b94 50%), linear-gradient(315deg, transparent 50%, #2b7b94 50%); }
.tools.filters { width: 100%; height: 31px; border: 0; }
.filters select {
  height: 20px;
  color: #999;
  opacity: 1;
  padding: 0 2px;
  background-image: linear-gradient(45deg, transparent 50%, #999 50%), linear-gradient(315deg, transparent 50%, #999 50%);
  background-position: right 8px center, right 4px center;
}
.filter-kind { width: 120px; margin: 0 8px 0 25px; }
.filter-scope { width: 139px; margin-right: 5px; }

/* Work area */
.work { display: flex; flex: 1; min-height: 0; border-top: 1px solid #888; background: #d5d7d8; }
.nav { display: flex; flex-direction: column; width: 206px; margin: 2px 4px 2px 0; padding-right: 5px; background: #fff; border: solid #aaa; border-width: 1px 1px 1px 0; }
.nav-title { display: flex; align-items: center; gap: 7px; height: 23px; padding: 0 5px 0 18px; font-size: 11px; }
.nav-title b { margin-right: auto; }
.tree { border-collapse: collapse; width: 100%; border-right: 1px solid #ccc; border-top: 1px solid #ccc; }
.tree th, .tree td { height: 20px; padding: 0 20px; border-bottom: 1px solid #e6e6e6; line-height: 19px; text-align: left; }
.tree th { height: 22px; background: #ededed; font-weight: normal; }
.tree tr:nth-child(even) td { background: #f9f9f9; }
.tree .root { padding-left: 21px; }
.tree .leaf { padding-left: 35px; }
.tree .leaf svg { float: left; margin: 2px 3px 0 0; }
.hscroll { display: flex; align-items: center; justify-content: space-between; height: 16px; margin-top: 7px; padding-right: 8px; background: #eee; }
.hthumb { width: 72px; height: 14px; border: 1px solid #999; background: repeating-linear-gradient(90deg, #444 0 1px, transparent 1px 4px) 48px 3px / 9px 7px no-repeat, linear-gradient(#f5f5f5, #c5c5c8); }
.fold { display: flex; align-items: center; justify-content: space-between; height: 24px; padding: 0 5px 0 20px; border-bottom: 2px solid #c8c8c8; color: #2e7f9b; font-size: 14px; }
.fold:not(.detail) { height: 29px; margin-top: 3px; border-top: 4px solid #ccc; }
.canvas { position: relative; flex: 1; background: linear-gradient(#b2b4b5, #dcdfe0 60%, #e5e8ea 78%, #e8ebec); border-right: 6px solid #fff; }
.canvas svg { position: absolute; }
.canvas text { font-size: 12px; }
.wcs { left: 520px; top: 169px; }
.triad { left: 47px; bottom: 34px; }
.triad text { font-size: 10px; }

.resource { display: flex; flex-direction: column; align-items: center; width: 32px; padding: 5px 3px 0 0; border-left: 1px solid #999; background: #dcdcdc; }
.resource button { margin-bottom: 18px; }
.resource button:first-child { margin: 0 0 30px 6px; }
.resource svg { width: 24px; height: 24px; }
.resource .gear-ic { width: 16px; height: 16px; }
.resource .gap { margin-bottom: 30px; }

.status { display: flex; align-items: center; justify-content: space-between; height: 23px; padding: 0 55px 3px 11px; border: solid #999; border-width: 1px 0; font-size: 11px; color: #111; }

/* Dialog */
.dialog { position: absolute; top: 205px; left: 122px; width: 328px; background: #e7e7e7; border: 1px solid #bbb; border-top: 0; }
.dialog-head { display: flex; align-items: center; height: 24px; margin: 0 -1px; padding: 0 9px 0 7px; background: #5e8983; color: #fff; }
.dialog-head h2 { margin: 0 auto 0 9px; font-size: 13px; line-height: 24px; }
.dialog-body { display: flex; flex-direction: column; gap: 4px; padding: 4px 5px 0; }
.group { padding: 3px 9px 8px; background: #fff; box-shadow: 0 1px 0 #c4c4c4; }
.group h3 { display: flex; align-items: center; justify-content: space-between; height: 20px; margin: 0 -3px 7px -2px; color: #3a89a8; font-size: 14px; }
.group > select { display: block; width: 100%; }
.subs { display: flex; gap: 2px; height: 32px; margin: 10px 0 1px 48px; }
.subs button { display: flex; align-items: center; justify-content: center; width: 32px; }
.subs .on { background: #c9d8d6; border: 1px solid #a9bdba; }
.subs svg { width: 24px; height: 24px; }
.place { padding-bottom: 6px; }
.field { position: relative; display: flex; align-items: center; height: 27px; }
.field label { flex: 1; }
.field select { width: 141px; }
.name input { display: block; width: 100%; height: 23px; padding: 0 4px; border: 1px solid #999; }
.actions { display: flex; gap: 6px; padding: 7px 8px 10px 134px; }
.actions button { width: 54px; height: 26px; }
.actions .primary { background: #93cbe9; border: 1px solid #4a98c6; }

.popup { position: absolute; z-index: 2; top: 25px; right: 0; width: 141px; display: flex; background: #fff; border: 1px solid #999; }
.popup ul { flex: 1; list-style: none; }
.popup li { height: 19px; padding-left: 2px; line-height: 19px; white-space: nowrap; }
.popup .sel { background: #3399ff; color: #fff; }
.vscroll { display: flex; flex-direction: column; align-items: center; width: 17px; padding: 7px 0 6px; background: #eee; }
.vthumb { width: 15px; height: 171px; margin-top: 7px; border: 1px solid #888; background: repeating-linear-gradient(#444 0 1px, transparent 1px 3px) center / 7px 8px no-repeat, linear-gradient(90deg, #f5f5f5, #b8b9bf); }
.vdown { margin-top: auto; }

/* Taskbar */
.taskbar {
  position: absolute;
  right: 0;
  bottom: 0;
  left: 0;
  display: flex;
  gap: 4px;
  height: 39px;
  padding-left: 7px;
  border-top: 1px solid #2e2623;
  background: linear-gradient(90deg, #453d3d, #5d5553 18%, #7d7672 32%, #88807c 45%, #837a76 65%, #6b6061 78%, #3f3838 88%, #352e2c);
}
.orb { width: 49px; }
.task { display: flex; align-items: center; justify-content: center; width: 58px; }
.framed { border: 1px solid #b5b0ae; border-radius: 3px; background: linear-gradient(135deg, #a29b98, #645d5b); }
.active { background: linear-gradient(135deg, #ddd9d8, #a19a99); }
/* the tray stays above the logo overlay */
.tray { position: relative; z-index: 1; display: flex; align-items: center; gap: 8px; margin-left: auto; color: #fff; }
.clock { display: flex; flex-direction: column; align-items: center; width: 70px; margin-left: 4px; line-height: 18px; }
.peek { align-self: stretch; width: 14px; margin-left: -4px; border: 1px solid #8a8481; }

.watermark { position: absolute; right: 0; bottom: 0; pointer-events: none; }
.watermark text { fill: #3a97c4; stroke: #e3f1f8; paint-order: stroke; stroke-linejoin: round; opacity: .92; }
.wm-big { font-family: "Noto Sans CJK SC", sans-serif; font-size: 46px; font-weight: 900; stroke-width: 4px; }
.wm-url { font-family: "DejaVu Sans", sans-serif; font-size: 19px; font-weight: bold; stroke-width: 3px; }
```
